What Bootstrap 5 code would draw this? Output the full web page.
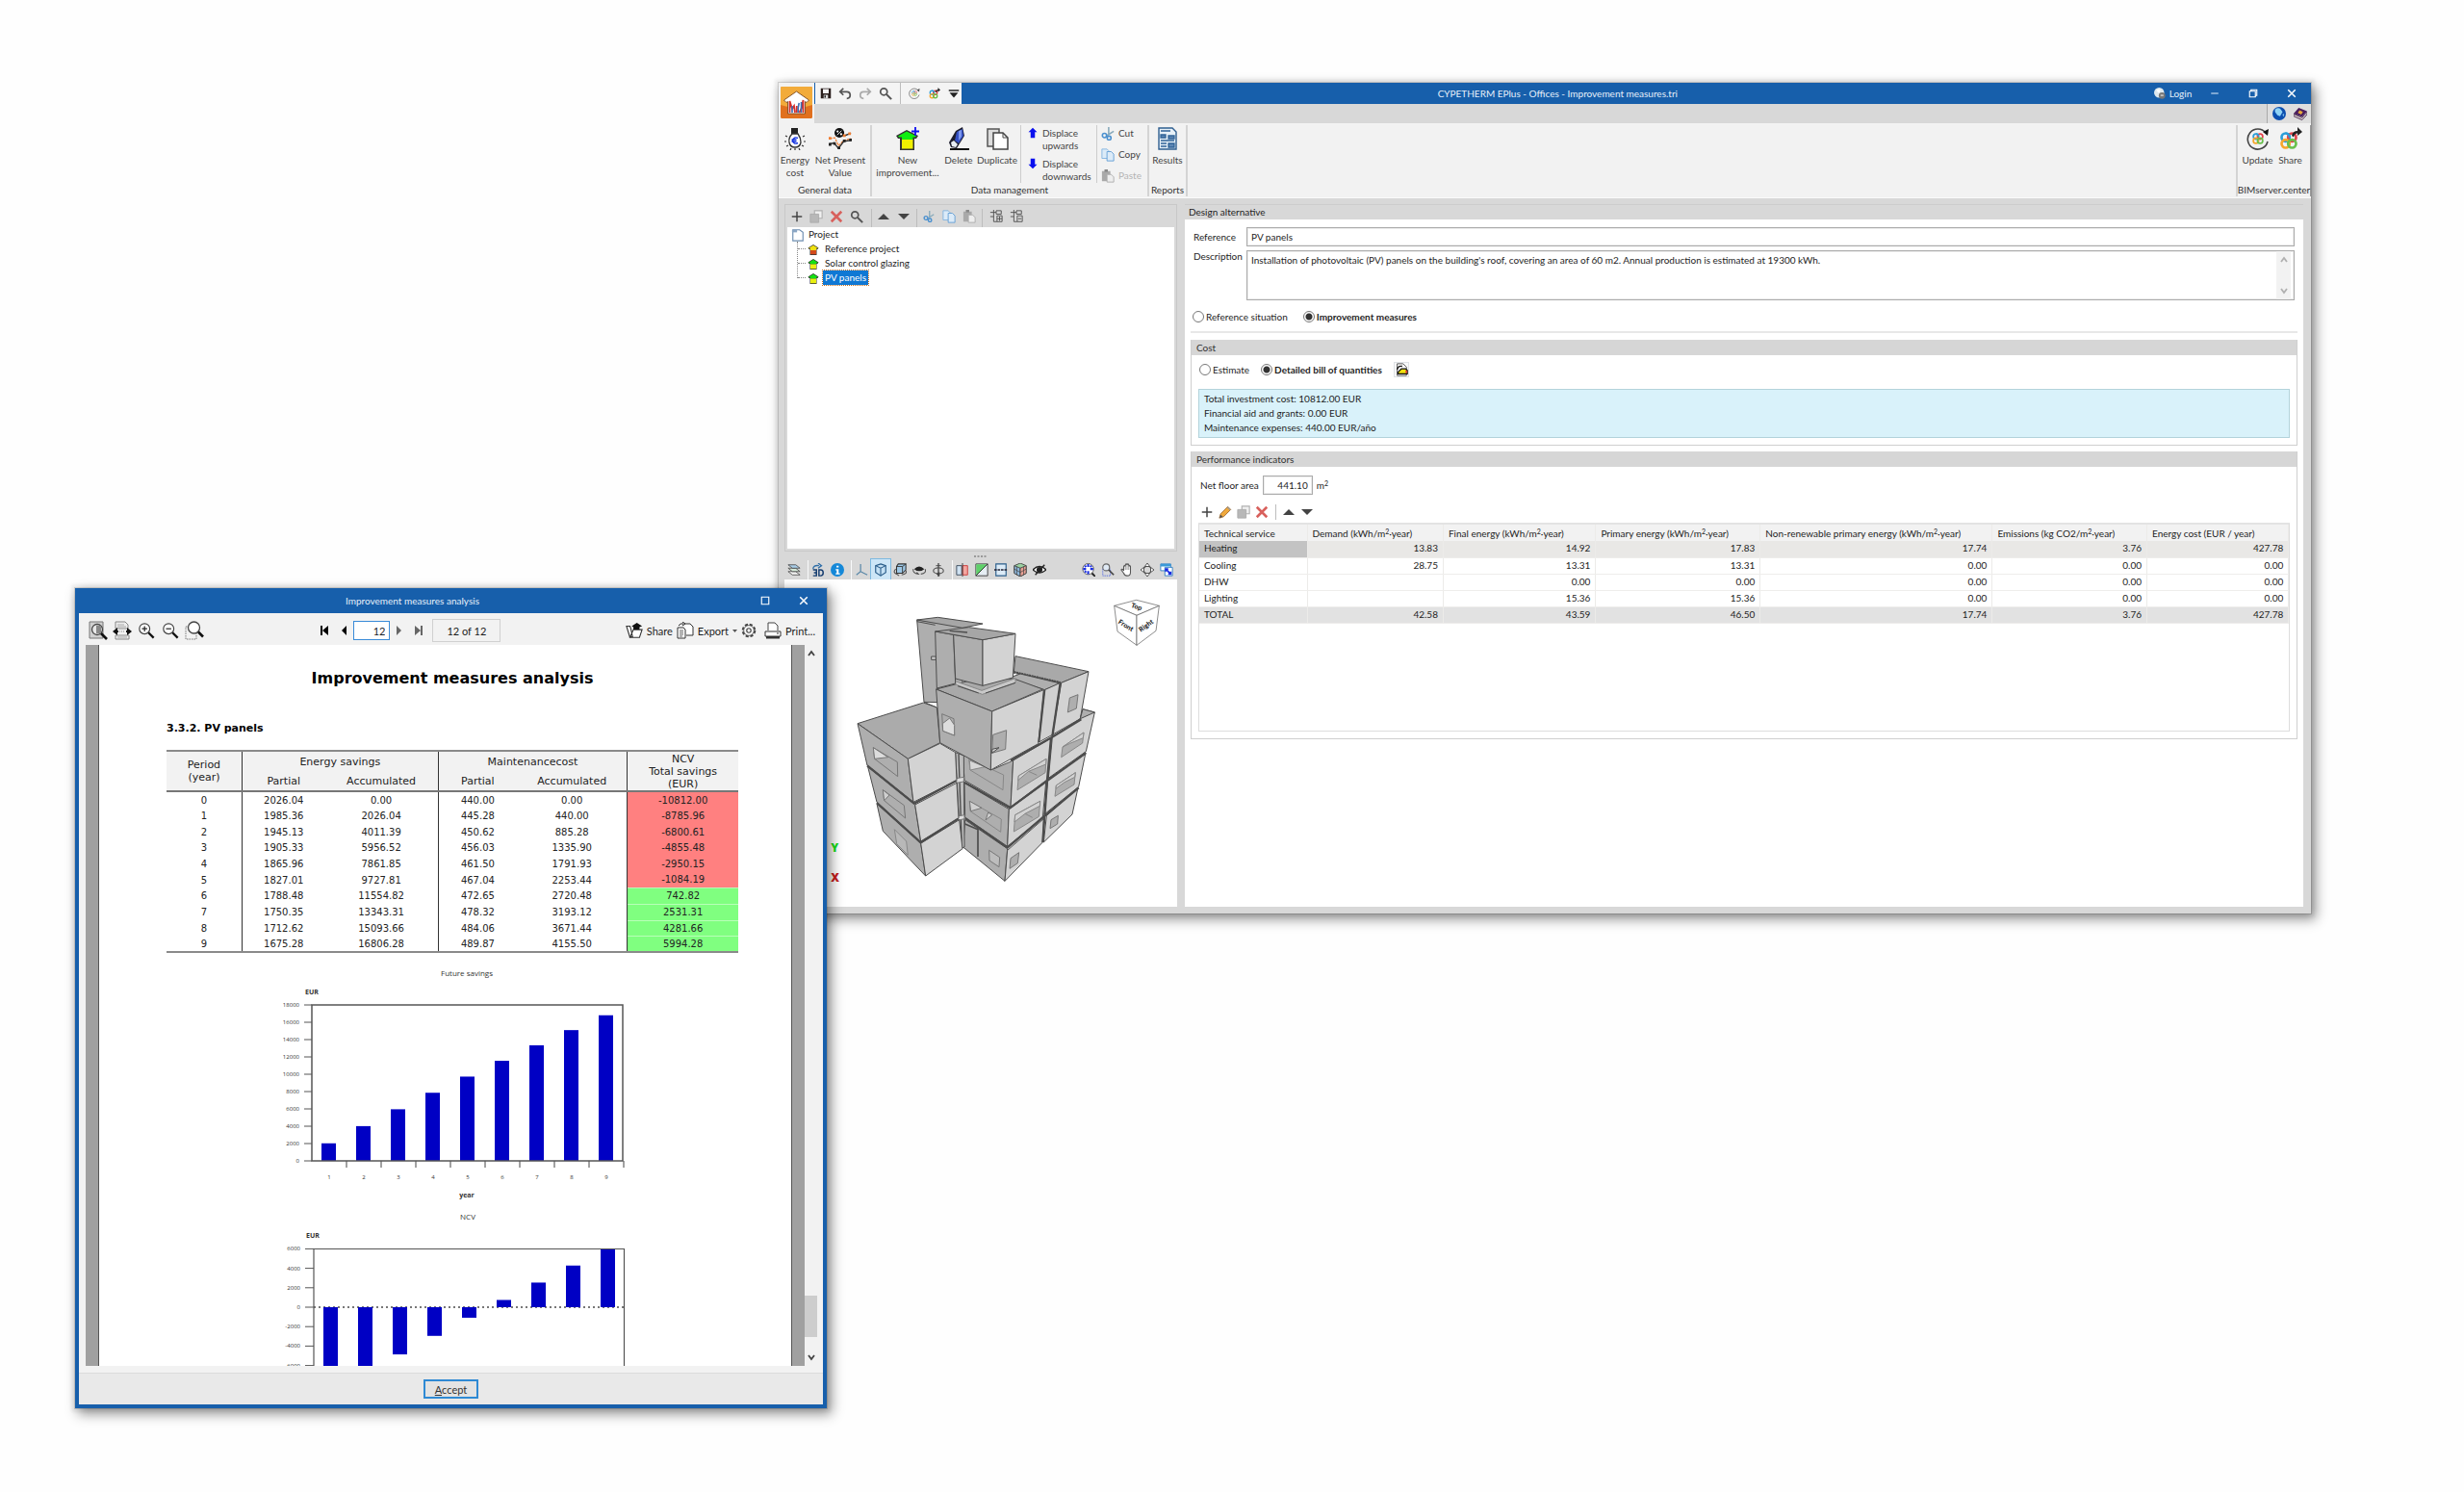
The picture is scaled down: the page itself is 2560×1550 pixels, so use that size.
<!DOCTYPE html>
<html lang="en">
<head>
<meta charset="utf-8">
<meta name="viewport" content="width=device-width, initial-scale=1">
<title>CYPETHERM EPlus - Offices - Improvement measures.tri</title>
<link href="https://cdn.jsdelivr.net/npm/bootstrap@5.3.0/dist/css/bootstrap.min.css" rel="stylesheet">
<style>
:root{--blue:#175fab;--chrome:#d8d8d8;--panel:#f2f2f2;--line:#c8c8c8}
body{font:10px/13px Lato,"Open Sans",sans-serif;color:#1d1d1d;background:#fefefe}
.desktop{min-height:100vh}
.win{box-shadow:0 0 0 1px rgba(0,0,0,.12),0 0 3px 4px rgba(0,0,0,.05),4px 5px 12px 1px rgba(0,0,0,.42)}
.win-main{left:31.6%;top:86px;width:62.2%;background:var(--chrome)}
.win-report{left:78px;top:611px;width:781px;background:var(--panel);border:4px solid var(--blue);border-top:0;font-size:11px}
.titlebar{background:var(--blue);color:#e6f0fa;font-size:10px}
.win-main .titlebar{height:22px}
.win-report .titlebar{height:26px}
.plain{border:0;background:none;padding:0;color:inherit;font:inherit}
svg{display:block}
.i12{width:12px;height:12px}.i14{width:14px;height:14px}.i16{width:16px;height:16px}.i18{width:18px;height:18px}.i24{width:24px;height:24px}
.cell19{width:19px;flex:none}.cell20{width:20px;flex:none}.cell21{width:21px;flex:none}.cell25{width:25px;flex:none}.cell40{width:40px;flex:none}
.appmark{width:37px;height:42px;left:0;top:0;background:var(--panel);z-index:2}
.qat{width:152px;height:22px;margin-left:38px;padding-left:1px;background:#f4f4f4}
.vrule{width:1px;align-self:stretch;background:#bdbdbd;flex:none}
.tabstrip{height:20px}
.tabhelp{width:46px;border-left:1px solid #aaa;background:#dedede}
.ribbon{height:78px;background:var(--panel);border-bottom:1px solid #fafafa;color:#333;padding-left:1px}
.rgroup{border-right:2px solid #d4d4d4;margin:2px 0 1px}
.rgroup-last{border-left:2px solid #d4d4d4;border-right:1px solid #999}
.rgroup-label{line-height:13px}
.rbtn{padding-top:2px;color:#444}
.rbtn svg{margin:0 auto 4px}
.w32{width:32px}.w34{width:34px}.w38{width:38px}.w48{width:48px}.w62{width:62px}.w74{width:74px}
.rdisp{width:80px;gap:6px;padding:2px 0 0 6px;border-left:1px solid #ccc;border-right:1px solid #ccc;text-align:left;color:#444}
.rclip{width:52px;padding:2px 0 0 4px;color:#444}
.dim{color:#b4b4b4}
.workarea{padding:6px 8px 7px 6px;gap:8px}
.side{flex:0 0 408px}
.treepane{border:1px solid var(--line);padding:0 2px 2px}
.tool24{height:23px}
.tree{height:334px;padding:0 0 0 4px;margin:0;background:#fff}
.tree li{height:15px;line-height:15px}
.tree .kids{margin-left:6px;border-left:1px dotted #888;height:38px}
.tree .kids li{gap:6px}
.tree .kids li::before{content:"";width:8px;margin-right:-4px;border-top:1px dotted #888}
.tree .picked{background:#0f78d4;color:#fff;outline:1px dotted #c87020;padding:0 2px;margin-left:-2px}
.splitter{height:9px}
.tool20{height:20px}
.on3d{background:#cde6f7;outline:1px solid #7db9e0}
.pane{background:#fff}
.panehead{height:16px;line-height:15px;background:var(--chrome);padding-left:4px;border-top:1px solid #cdcdcd}
.panebody{padding:8px 6px 0}
.fld{gap:4px;padding:0 3px}
.fld label.fld-label{width:55px;flex:none}
.form-control.box{border:1px solid #ababab;border-radius:0;font:inherit;color:inherit;padding:0 4px;height:20px;min-height:0;background:#fff;box-shadow:inset 0 0 0 1px #ececec}
.form-control.box.num{width:52px;text-align:right}
textarea.form-control.box{height:52px;padding:3px 4px;resize:none;overflow:hidden}
.tascroll{right:4px;top:1px;width:15px;height:50px;background:var(--panel);color:#b0b0b0;padding:4px 0}
.opt input{appearance:none;width:12px;height:12px;border:1px solid #777;border-radius:50%;margin:0;background:#fff}
.opt input:checked{background:radial-gradient(circle,#333 0 3px,#fff 4px)}
.opt{gap:2px;height:16px}
.kindrow{gap:16px;padding:9px 2px 0}
.costrow{gap:12px;padding-left:1px}
.sep2{height:2px;background:#e8e8e8;margin:7px 0}
.grp{border:1px solid #cfcfcf;border-top:0;margin-bottom:6px}
.grphead{height:16px;line-height:16px;background:#d6d6d6;padding-left:5px;color:#333}
.grpbody{padding:7px}
.arearow{padding:2px 0 0 2px;margin-bottom:10px}
.info{background:#d9f2fa;border:1px solid #b3d3db;padding:2px 5px;line-height:15px;margin-top:12px}
.gridbox{height:217px;border:1px solid #ddd;border-top:2px solid #e3e3e3;margin-top:3px}
.table.grid{font-size:10px;line-height:13px;margin:0;table-layout:fixed;color:inherit}
.table.grid th,.table.grid td{height:17px;padding:1px 5px;border:0;border-right:1px solid #ecebe9;border-bottom:1px solid #eeedeb;font-weight:400;background:none;white-space:nowrap;color:inherit}
.table.grid thead th{background:var(--panel);border-bottom:0;padding-top:3px}
.table.grid td{text-align:right}
.table.grid .sel{background:#e9e8e6}.table.grid .sel th{background:#c3c3c3}
.table.grid .tot{background:#e2e2e2}
sup.p2{font-size:7px;line-height:1px;top:-3px;vertical-align:baseline;position:relative}
/* report */
.rtool{height:33px;padding:3px 8px 0 7px}
.pager{padding-right:16px}
.numbox.form-control{width:38px;height:20px;border:1px solid #3a8bd8;border-radius:0;font:inherit;padding:0 4px;text-align:right;min-height:0}
.pages{width:71px;height:24px;border:1px solid #d0d0d0}
.viewport{height:749px;padding:0 6px 0 7px}
.gutter{width:14px;background:#a0a0a0;flex:none}
.gutter.l{border-right:1px solid #555}.gutter.r{border-left:1px solid #555}
.sheet{background:#fff;overflow:hidden;font-family:"DejaVu Sans",Verdana,sans-serif;padding:0 55px 0 70px}
.sheet h1{font-size:16px;line-height:20px;font-weight:700;margin:25px 0 0;color:#000;text-align:center}
.sheet h2{font-size:11px;line-height:14px;font-weight:700;margin:35px 0 15px;color:#000}
.table.ncv{font-size:10px;line-height:13px;table-layout:fixed;text-align:center;margin:0;border-top:2px solid #8a8a8a;border-bottom:2px solid #8a8a8a;color:#222}
.table.ncv th,.table.ncv td{padding:0;border:0;font-weight:400;vertical-align:middle;background:none;color:inherit}
.table.ncv thead{font-size:11px;background:#f2f2f2;border-bottom:2px solid #777}
.table.ncv thead tr{height:21px}
.table.ncv tbody tr{height:17px}
.table.ncv tbody tr:nth-child(3n){height:16px}
.table.ncv .bl{border-left:1px solid #333}
.table.ncv .neg{background:#ff8080}.table.ncv .pos{background:#80ff80;border-top:1px solid #b8ffb8}
.charts text{font-family:"Open Sans",sans-serif;fill:#333}
.vbar{width:15px;background:var(--panel);color:#444;padding:4px 0}
.thumb{width:13px;height:43px;background:#cdcdcd}
.dfoot{height:33px;background:#e9e9e9;border-top:1px solid #dcdcdc;margin-top:7px}
.okbtn{width:57px;height:20px;border:2px solid #2f8ad4;background:#e3e3e3;line-height:15px;padding:0;color:#333}
</style>
<script src="https://cdn.jsdelivr.net/npm/bootstrap@5.3.0/dist/js/bootstrap.bundle.min.js"></script>
</head>
<body>
<svg width="0" height="0" class="position-absolute" aria-hidden="true"><defs>
<symbol id="save" viewBox="0 0 16 16"><path d="M1 1h14v14H1z" fill="#2a1f1d"/><path d="M4 2h8v6H4z" fill="#f4f4f4"/><path d="M5 10h6v5H5z" fill="#ddd"/><path d="M6 11h2v3H6z" fill="#222"/></symbol>
<symbol id="undo" viewBox="0 0 16 16"><path d="M6 2 2 6l4 4M2 6h8q4 0 4 4t-4 4" fill="none" stroke="#555" stroke-width="2"/></symbol>
<symbol id="redo" viewBox="0 0 16 16"><path d="m10 2 4 4-4 4M14 6H6q-4 0-4 4t4 4" fill="none" stroke="#aaa" stroke-width="2"/></symbol>
<symbol id="search" viewBox="0 0 16 16"><circle cx="6" cy="6" r="4" fill="none" stroke="#555" stroke-width="2"/><path d="m9 9 6 6" stroke="#555" stroke-width="2.4"/></symbol>
<symbol id="rings" viewBox="0 0 24 24"><g fill="none" stroke-width="3.2"><circle cx="8" cy="8" r="5" stroke="#2a9ed8"/><circle cx="16" cy="8" r="5" stroke="#e2434b"/><circle cx="8" cy="16" r="5" stroke="#f6a52a"/><circle cx="16" cy="16" r="5" stroke="#67c04b"/><path d="M8 3a5 5 0 0 1 5 5" stroke="#2a9ed8"/></g></symbol>
<symbol id="update" viewBox="0 0 24 24"><path d="M20 6A10.500 10.500 0 1 0 22 15" fill="none" stroke="#444" stroke-width="1.600"/><path d="M17 5l6-3-1 7z" fill="#111"/><use href="#rings" x="5.500" y="5.500" width="13" height="13"/></symbol>
<symbol id="share" viewBox="0 0 24 24"><use href="#rings" x="0" y="4" width="20" height="20"/><path d="M13 9q1-5 6-5V0l5 5-5 4V6.500q-3 0-4 4z" fill="#222"/></symbol>
<symbol id="more" viewBox="0 0 16 16"><path d="M1 3h14v2H1zM2 7h12l-6 7z" fill="#222"/></symbol>
<symbol id="app" viewBox="0 0 33 33"><rect width="33" height="33" rx="1.500" fill="#e0701f"/><path d="M1.500 0h30A1.500 1.500 0 0 1 33 1.500V19q-16 6-33 0V1.500A1.500 1.500 0 0 1 1.500 0" fill="#f2ab3a"/><path d="M16.500 5 3.500 14l2.500 2.500 1.500-1V28h18V15.500l1.500 1 2.500-2.500z" fill="#fff" stroke="#7a4a20" stroke-width=".9"/><path d="M9.500 27V15l2.500 8 2-3 1 7M23.500 27V14l-2 9-2 4M16.800 27v-7" fill="none" stroke="#d8302a" stroke-width="1.800"/><path d="M12 27v-7M21.500 27V16M18.200 27v-5l1-5" fill="none" stroke="#3a6fb4" stroke-width="1.600"/></symbol>
<symbol id="bulb" viewBox="0 0 24 24"><path d="M8 1h7v6H8z" fill="#222"/><path d="M9 7q-4 4-3 9 1 5 6 5t6-5q0-5-3-9z" fill="#fff" stroke="#333" stroke-width="1.300"/><path d="M15 11.500q-4-2-5.500 2.500 1 4.500 5.500 2.500M8.500 13h5M8.500 15h5" fill="none" stroke="#1030e0" stroke-width="1.400"/><path d="M2 9l2 1M1 15h2M3 20l2-1M7 24l1-2M22 9l-2 1M23 15h-2M21 20l-2-1M17 24l-1-2M12 22v2" stroke="#333" stroke-width="1.200"/></symbol>
<symbol id="npv" viewBox="0 0 26 24"><circle cx="12" cy="5.500" r="5.500" fill="#111"/><path d="M9.500 8l5-5" stroke="#fff"/><circle cx="10" cy="4" r="1.200" fill="#fff"/><circle cx="14" cy="7" r="1.200" fill="#fff"/><path d="M1 12l6-1 4 9 6-6 8-2" fill="none" stroke="#ef7d32" stroke-width="1.300" stroke-dasharray="3 1"/><path d="M1 18l5-1 5 6 6-8 8-1M17 9l8-3" fill="none" stroke="#333" stroke-width="1.500"/><path d="M0 17h3v3H0zM5 16h3v3H5zM10 21h3v3h-3zM16 13h3v3h-3zM23 12h3v3h-3z" fill="#222"/><path d="M16 7h3v3h-3zM22 5h3v3h-3zM0 10h3v3H0z" fill="#ef7d32"/></symbol>
<symbol id="house" viewBox="0 0 24 24"><path d="M12 2 1 9l2 3h2v12h14V12h2l2-3z" fill="#333"/><path d="M12 3.500 2.500 9.500l1 1H6V13h12v-2.500h2.500l1-1z" fill="#14e014"/><path d="M6 13h12v9.500H6z" fill="#e8ef10"/></symbol>
<symbol id="housenew" viewBox="0 0 24 24"><path d="M11 3 0 9l2 3h2v12h15V12h2l2-3z" fill="#333"/><path d="M11 4.500 2 9.500l1 1h3V13h11.500v-2.500H20l1-1z" fill="#10ef10"/><path d="M6 13h11.500v9.500H6z" fill="#f0f000"/><path d="M20 0v9M16 4.500h8" stroke="#1010f0" stroke-width="1.800"/></symbol>
<symbol id="houseref" viewBox="0 0 24 24"><path d="M12 2 1 9l2 3h2v12h14V12h2l2-3z" fill="#333"/><path d="M12 3.500 2.500 9.500l1 1H6V14h12v-3.500h2.500l1-1z" fill="#efe010"/><path d="M6 14h12v8.500H6z" fill="#d24a1c"/></symbol>
<symbol id="eraser" viewBox="0 0 24 24"><path d="M3 22h20v2H3z" fill="#111"/><path d="M9 4 16 0l2 9-8 13-6-1-2-5z" fill="#1c1c2c"/><path d="M10 5l6-3 1 7-5 8-4-3z" fill="#3450c4"/><path d="M12 4l3-1v7l-3 4z" fill="#7d97ee"/><path d="M7 14l4 4-2 3-4-1-1-4z" fill="#e8eef4"/></symbol>
<symbol id="dup" viewBox="0 0 24 24"><path d="M2 2h12v18H2z" fill="#ddd" stroke="#555" stroke-width="1.500"/><path d="M8 6h10l5 5v12H8z" fill="#fff" stroke="#444" stroke-width="1.500"/><path d="M18 6v5h5" fill="none" stroke="#444"/></symbol>
<symbol id="up" viewBox="0 0 16 16"><path d="M8 1l6 6h-3v8H5V7H2z" fill="#0a10ee"/></symbol>
<symbol id="down" viewBox="0 0 16 16"><path d="M8 15l6-6h-3V1H5v8H2z" fill="#0a10ee"/></symbol>
<symbol id="cut" viewBox="0 0 16 16"><path d="M9 0v9M15 5 7 10" stroke="#8ab" stroke-width="1.800"/><circle cx="4" cy="10" r="2.500" fill="none" stroke="#4a90cf" stroke-width="1.800"/><circle cx="9.500" cy="13" r="2.300" fill="none" stroke="#4a90cf" stroke-width="1.800"/></symbol>
<symbol id="copy" viewBox="0 0 16 16"><path d="M1 1h6l2 2v9H1z" fill="#dcebf8" stroke="#7fb2e0"/><path d="M7 4h5l3 3v8H7z" fill="#dcebf8" stroke="#5f9bd4"/></symbol>
<symbol id="paste" viewBox="0 0 16 16"><path d="M1 2h10v12H1z" fill="#a9a9a9"/><path d="M4 0h4v3H4z" fill="#888"/><path d="M7 6h5l3 3v6H7z" fill="#eee" stroke="#aaa"/></symbol>
<symbol id="results" viewBox="0 0 20 24"><path d="M1 1h14l4 4v18H1z" fill="#e6f0f8" stroke="#2f5f90" stroke-width="1.400"/><path d="M3 4h10M3 8h5v3H3zM11 9h6v3h-6zM3 14h14M3 17h6M3 20h6M11 17h6v4h-6z" stroke="#2f6296" stroke-width="1.300" fill="#5d87b4"/></symbol>
<symbol id="plus" viewBox="0 0 16 16"><path d="M8 1v14M1 8h14" stroke="#444" stroke-width="2"/></symbol>
<symbol id="stack" viewBox="0 0 16 16"><path d="M6 1h9v9H6z" fill="#f0f0f0" stroke="#b0b0b0" stroke-width="1.300"/><path d="M1 5h10v10H1z" fill="#b8b8b8" stroke="#aaa"/></symbol>
<symbol id="cross" viewBox="0 0 16 16"><path d="M2 2l12 12M14 2 2 14" stroke="#d8605c" stroke-width="3"/></symbol>
<symbol id="triu" viewBox="0 0 16 16"><path d="M8 4l8 8H0z" fill="#444"/></symbol>
<symbol id="trid" viewBox="0 0 16 16"><path d="M8 12l8-8H0z" fill="#444"/></symbol>
<symbol id="texp" viewBox="0 0 16 16"><path d="M1 3h5M5 0v14h4M1 8h4M5 3h3M8 1h6v4H8zM9 7h6v7H9zM12 8v5M9 10.500h6" fill="none" stroke="#555" stroke-width="1.100"/></symbol>
<symbol id="tcol" viewBox="0 0 16 16"><path d="M1 3h5M5 0v14h4M1 8h4M5 3h3M8 1h6v4H8zM9 7h6v7H9zM10 10.500h4" fill="none" stroke="#555" stroke-width="1.100"/></symbol>
<symbol id="doc" viewBox="0 0 16 16"><path d="M2 2h8l4 3v10H2z" fill="#fff" stroke="#6c8db0" stroke-width="1.300"/><path d="M1 2h6v3H1z" fill="#8aa6c4"/></symbol>
<symbol id="layers" viewBox="0 0 16 16"><g stroke="#444" stroke-width=".9"><path d="M1 10h9l5 4H6z" fill="#f4f4f4"/><path d="M1 6h9l5 4H6z" fill="#d5e8d8"/><path d="M1 2h9l5 4H6z" fill="#a9cde8"/></g></symbol>
<symbol id="rot3d" viewBox="0 0 16 16"><path d="M2 7q0-5 7-4M8 0l4 3-4 3" fill="none" stroke="#2f6ea8" stroke-width="1.500"/><path d="M2 8h4v7H2M3 11.500h3M9 8v7h2q3 0 3-3.500T11 8z" fill="none" stroke="#173e70" stroke-width="1.700"/></symbol>
<symbol id="inf" viewBox="0 0 16 16"><circle cx="8" cy="8" r="8" fill="#1588d8"/><path d="M7 3h2.500v2.200H7zM6 7h3.500v5H11v1.500H6V12h1.200V8.500H6z" fill="#fff"/></symbol>
<symbol id="axes" viewBox="0 0 16 16"><path d="M7 1v9L2 14M7 10l8 4" fill="none" stroke="#5a88a8" stroke-width="1.400"/></symbol>
<symbol id="cube" viewBox="0 0 16 16"><path d="M8 1l6 2v8l-6 4-6-4V3z" fill="#c4e0f4" stroke="#2a5d8a" stroke-width="1.300"/><path d="M2 3l6 3 6-3M8 6v9" fill="none" stroke="#2a5d8a" stroke-width="1.200"/></symbol>
<symbol id="cuberot" viewBox="0 0 16 16"><path d="M6 1h9v7l-4 4H4V4z" fill="#9ec8e6" stroke="#333" stroke-width="1.200"/><path d="M4 4h7v8M11 4l4-3" fill="none" stroke="#333"/><path d="M3 7q-4 4 1 6l3 2M15 9q2 4-5 5" fill="none" stroke="#555" stroke-width="1.300"/></symbol>
<symbol id="eyerot" viewBox="0 0 16 16"><path d="M2 7q6-6 12 0-6 5-12 0z" fill="#222"/><path d="M1 7q-1 5 6 6l-2-2M15 7q2 5-5 6" fill="none" stroke="#555" stroke-width="1.200"/></symbol>
<symbol id="pivot" viewBox="0 0 16 16"><path d="M8 0v16" stroke="#444" stroke-width="1.500"/><ellipse cx="8" cy="9" rx="6" ry="3.500" fill="none" stroke="#555" stroke-width="1.300"/><path d="M5 3h6M6 13l3-2v4z" stroke="#444" fill="#444"/></symbol>
<symbol id="secv" viewBox="0 0 16 16"><path d="M1 3h6v11H1z" fill="#cfe2f2" stroke="#345"/><path d="M8 3h6v11H8z" fill="#f3a6a0" stroke="#c33"/><path d="M8 0v16" stroke="#333"/></symbol>
<symbol id="secd" viewBox="0 0 16 16"><path d="M1 1h14v14H1z" fill="#e6eef4" stroke="#333"/><path d="M1.500 1.500h13l-13 13z" fill="#5fd06a"/><path d="M1 15 15 1" stroke="#222"/></symbol>
<symbol id="sech" viewBox="0 0 16 16"><path d="M2 1h12v14H2z" fill="#dcebf7" stroke="#2a5d8a" stroke-width="1.300"/><path d="M0 8h16" stroke="#223" stroke-width="1.500" stroke-dasharray="3 1"/></symbol>
<symbol id="cubec" viewBox="0 0 16 16"><path d="M8 0l7 3v9l-7 4-7-4V3z" fill="#9ad0a0" stroke="#444"/><path d="M1 3l7 3v10l-7-4z" fill="#8fb8dc" stroke="#444"/><path d="M8 6l7-3v9l-7 4z" fill="#e7a094" stroke="#444"/><path d="M1 7l7 4 7-4M4 4v10M12 4v10" fill="none" stroke="#444" stroke-width=".8"/></symbol>
<symbol id="eyeoff" viewBox="0 0 16 16"><path d="M0 8q8-8 16 0-8 7-16 0z" fill="#fff" stroke="#222" stroke-width="1.500"/><circle cx="8" cy="8" r="3.500" fill="#222"/><path d="M3 14 14 2" stroke="#222" stroke-width="1.600"/></symbol>
<symbol id="zext" viewBox="0 0 16 16"><circle cx="7.500" cy="7" r="6.500" fill="#fff" stroke="#555"/><path d="M7.500 1v3.500M7.500 13V9.500M1.500 7H5M13.500 7H10M3.500 3l1.500 1.500M11.500 3 10 4.500M3.500 11 5 9.500" stroke="#1a2de0" stroke-width="2.400"/><path d="m12 12 4 4" stroke="#222" stroke-width="2.200"/></symbol>
<symbol id="zwin" viewBox="0 0 16 16"><path d="M2 7h9v8H2z" fill="none" stroke="#4a62e0" stroke-dasharray="1.500 1"/><circle cx="6" cy="5" r="4" fill="#dfe9f4" stroke="#666" stroke-width="1.300"/><path d="m9 8 6 6" stroke="#444" stroke-width="2"/></symbol>
<symbol id="hand" viewBox="0 0 16 16"><path d="M4 9V4q1-2 2 0V2q1-2 2 0v0q1-2 2 0v2q1-2 2 0v7q0 4-4 4-3 0-4-3L1 8q1-2 3 1" fill="#fff" stroke="#555" stroke-width="1.200"/><path d="M6 4v4M8 3v5M10 4v4" stroke="#777" stroke-width=".8"/></symbol>
<symbol id="orbit" viewBox="0 0 16 16"><circle cx="8" cy="8" r="4.500" fill="none" stroke="#555" stroke-width="1.500"/><path d="M8 0l3 4H5zM8 16l3-4H5zM0 8l4-3v6zM16 8l-4-3v6z" fill="#fff" stroke="#444"/></symbol>
<symbol id="wins" viewBox="0 0 16 16"><path d="M1 1h12v8H1z" fill="#fff" stroke="#2c7cc0"/><path d="M1 1h12v3H1z" fill="#3a9ad8"/><path d="M6 5h9v10H6z" fill="#fff" stroke="#2c7cc0"/><path d="M7 7l6 6M7 10V7h3M13 10v3h-3" stroke="#1a2de0" stroke-width="2" fill="none"/></symbol>
<symbol id="pencil" viewBox="0 0 16 16"><path d="M1 15l1.500-5L11 1.500l3.500 3.500L6 13.500z" fill="#f0a93c" stroke="#a06a30"/><path d="M1 15l1.500-4 2.500 2.500z" fill="#555"/><path d="M10 2.500 13.500 6l1-1L11 1.500z" fill="#999"/></symbol>
<symbol id="import" viewBox="0 0 16 16"><path d="M3 1h7l4 4v10H3z" fill="#fff" stroke="#444"/><path d="M3 8q1-5 6-4" fill="none" stroke="#111" stroke-width="1.500"/><path d="M4 11l4-4h5l2 2v4H4z" fill="#efe010" stroke="#111" stroke-width="1.500"/><path d="M13 9h2v3h-2z" fill="#d33"/></symbol>
<symbol id="globe" viewBox="0 0 16 16"><circle cx="8" cy="8" r="8" fill="#0c4fb0"/><path d="M3 3q4-3 7 0l2 3-3 5-3-1-3-4zM12 9l2-1-1 4z" fill="#8fd2f5"/></symbol>
<symbol id="login" viewBox="0 0 16 16"><circle cx="7" cy="7" r="7" fill="#dfe9ee"/><path d="M3 4q3-3 6-1l-2 5z" fill="#fff"/><circle cx="11" cy="11" r="4.500" fill="#777"/><path d="M9 10h4v1.500H9z" fill="#eee"/></symbol>
<symbol id="book" viewBox="0 0 16 16"><path d="M6 1l10 4-6 7L0 8z" fill="#4a1e5e"/><path d="M0 8.500l10 4.500 6-7v3l-6 6.500L0 11z" fill="#efe6e0" stroke="#3a1a40"/><path d="M7 4l4 2-2 3-4-2z" fill="#e8a83a"/></symbol>
<symbol id="xw" viewBox="0 0 16 16"><path d="M3 3l10 10M13 3 3 13" stroke="#fff" stroke-width="2"/></symbol>
<symbol id="minw" viewBox="0 0 16 16"><path d="M3 8h10" stroke="#cfe0f2" stroke-width="1.500"/></symbol>
<symbol id="resw" viewBox="0 0 16 16"><path d="M3 5h8v8H3zM5 5V3h8v8h-2" fill="none" stroke="#fff" stroke-width="1.500"/></symbol>
<symbol id="maxw" viewBox="0 0 16 16"><path d="M3 3h10v10H3z" fill="none" stroke="#fff" stroke-width="1.500"/></symbol>
<symbol id="pfit" viewBox="0 0 20 20"><path d="M1 1h14v17H1z" fill="#d0d0d0" stroke="#777"/><circle cx="9" cy="9" r="5.500" fill="#e8e8e8" stroke="#444" stroke-width="1.300"/><path d="M8 5h5v8H8z" fill="#888"/><path d="m13 13 6 6" stroke="#111" stroke-width="2.600"/></symbol>
<symbol id="pwid" viewBox="0 0 20 20"><path d="M3 1h10l3 3v4H3zM3 15h14v4H3z" fill="#eee" stroke="#888"/><path d="M5 4h7M5 6h9M5 17h10" stroke="#aaa"/><path d="M0 11l5-4v3h1v2H5v3zM20 11l-5-4v3h-1v2h1v3z" fill="#111"/><path d="M7 11h6" stroke="#888" stroke-dasharray="1 1"/></symbol>
<symbol id="zin" viewBox="0 0 20 20"><circle cx="8" cy="8" r="6" fill="#fff" stroke="#444" stroke-width="1.300"/><path d="M5 8h6M8 5v6" stroke="#222" stroke-width="1.300"/><path d="m12.500 12.500 6 6" stroke="#111" stroke-width="2.600"/></symbol>
<symbol id="zout" viewBox="0 0 20 20"><circle cx="8" cy="8" r="6" fill="#fff" stroke="#444" stroke-width="1.300"/><path d="M5 8h6" stroke="#222" stroke-width="1.300"/><path d="m12.500 12.500 6 6" stroke="#111" stroke-width="2.600"/></symbol>
<symbol id="zsel" viewBox="0 0 20 20"><path d="M1 6h11v13H1z" fill="none" stroke="#777" stroke-dasharray="1.500 1"/><circle cx="9.500" cy="7" r="6" fill="#fff" stroke="#444" stroke-width="1.300"/><path d="m14 11.500 5 5" stroke="#111" stroke-width="2.600"/></symbol>
<symbol id="nfirst" viewBox="0 0 12 12"><path d="M2 1h2v10H2zM10 1v10L4 6z"/></symbol>
<symbol id="nprev" viewBox="0 0 12 12"><path d="M9 1v10L4 6z"/></symbol>
<symbol id="nnext" viewBox="0 0 12 12"><path d="M3 1v10l5-5z"/></symbol>
<symbol id="nlast" viewBox="0 0 12 12"><path d="M8 1h2v10H8zM2 1v10l6-5z"/></symbol>
<symbol id="shr" viewBox="0 0 20 18"><path d="M1 4h4l1 3 2 9-3 1zM5 17l4-9h10l-3 9z" fill="#fff" stroke="#333" stroke-width="1.200"/><path d="M13 0l6 4-3 1v3H9V5L7 4z" fill="#111"/></symbol>
<symbol id="expt" viewBox="0 0 18 18"><path d="M9 2h5l3 3v9h-7" fill="#fff" stroke="#333"/><path d="M1 6h6l2 2v9H1z" fill="#fff" stroke="#333"/><path d="M3 9h4M3 11h4M3 13h4M3 15h3" stroke="#666"/><path d="M2 4q2-3 5-2M6 0l3 2-3 2" fill="none" stroke="#222"/></symbol>
<symbol id="gear" viewBox="0 0 18 18"><circle cx="9" cy="9" r="7" fill="none" stroke="#444" stroke-width="2.400" stroke-dasharray="3.500 2"/><circle cx="9" cy="9" r="6" fill="#fafafa" stroke="#555"/><circle cx="9" cy="9" r="2.500" fill="none" stroke="#444" stroke-width="1.300"/></symbol>
<symbol id="print" viewBox="0 0 18 18"><path d="M4 9V1h7l3 3v5" fill="#fff" stroke="#444"/><path d="M1 10h16v5H1z" fill="#fff" stroke="#333"/><path d="M2 15h14v2.500H2z" fill="#333"/><path d="M13 12h2" stroke="#333"/></symbol>
<symbol id="cu" viewBox="0 0 10 10"><path d="M2 7l3-4 3 4" fill="none" stroke="currentColor" stroke-width="1.800"/></symbol>
<symbol id="cd" viewBox="0 0 10 10"><path d="M2 3l3 4 3-4" fill="none" stroke="currentColor" stroke-width="1.800"/></symbol>
</defs></svg>

<main class="desktop position-relative overflow-hidden">
<section class="win win-main position-absolute" aria-label="CYPETHERM EPlus">
  <header class="position-relative">
    <div class="appmark position-absolute d-flex justify-content-center pt-1"><svg width="33" height="33"><use href="#app"/></svg></div>
    <div class="titlebar d-flex align-items-center">
      <div class="qat d-flex align-items-center">
        <button class="plain cell20" aria-label="Save"><svg class="i12 mx-auto"><use href="#save"/></svg></button>
        <button class="plain cell21" aria-label="Undo"><svg class="i14 mx-auto"><use href="#undo"/></svg></button>
        <button class="plain cell21" aria-label="Redo"><svg class="i14 mx-auto"><use href="#redo"/></svg></button>
        <button class="plain cell21" aria-label="Search"><svg class="i14 mx-auto"><use href="#search"/></svg></button>
        <span class="vrule ms-1"></span>
        <button class="plain cell21 ms-1" aria-label="Update"><svg class="i12 mx-auto opacity-75"><use href="#update"/></svg></button>
        <button class="plain cell20" aria-label="Share"><svg class="i12 mx-auto"><use href="#share"/></svg></button>
        <button class="plain cell20" aria-label="More"><svg class="i12 mx-auto"><use href="#more"/></svg></button>
      </div>
      <div class="flex-fill text-center">CYPETHERM EPlus - Offices - Improvement measures.tri</div>
      <button class="plain d-flex align-items-center gap-1"><svg class="i12"><use href="#login"/></svg>Login</button>
      <button class="plain cell40 ms-1" aria-label="Minimize"><svg class="i12 mx-auto"><use href="#minw"/></svg></button>
      <button class="plain cell40" aria-label="Restore"><svg class="i12 mx-auto"><use href="#resw"/></svg></button>
      <button class="plain cell40" aria-label="Close"><svg class="i12 mx-auto"><use href="#xw"/></svg></button>
    </div>
    <div class="tabstrip d-flex justify-content-end"><div class="tabhelp d-flex align-items-center justify-content-around"><button class="plain" aria-label="Web"><svg class="i14"><use href="#globe"/></svg></button><button class="plain" aria-label="Help"><svg class="i14"><use href="#book"/></svg></button></div></div>
  </header>

  <nav class="ribbon d-flex text-center" aria-label="Ribbon">
    <div class="rgroup d-flex flex-column justify-content-between">
      <div class="d-flex align-items-start">
        <button class="plain rbtn w32"><svg class="i24"><use href="#bulb"/></svg>Energy cost</button>
        <button class="plain rbtn w62"><svg class="i24"><use href="#npv"/></svg>Net Present Value</button>
      </div><div class="rgroup-label">General data</div>
    </div>
    <div class="rgroup d-flex flex-column justify-content-between">
      <div class="d-flex align-items-start">
        <button class="plain rbtn w74"><svg class="i24"><use href="#housenew"/></svg>New improvement...</button>
        <button class="plain rbtn w32"><svg class="i24"><use href="#eraser"/></svg>Delete</button>
        <button class="plain rbtn w48"><svg class="i24"><use href="#dup"/></svg>Duplicate</button>
        <div class="rdisp d-flex flex-column">
          <button class="plain d-flex gap-1 text-start"><svg class="i12 flex-shrink-0"><use href="#up"/></svg><span>Displace<br>upwards</span></button>
          <button class="plain d-flex gap-1 text-start"><svg class="i12 flex-shrink-0"><use href="#down"/></svg><span>Displace<br>downwards</span></button>
        </div>
        <div class="rclip d-flex flex-column gap-2">
          <button class="plain d-flex gap-1"><svg class="i14"><use href="#cut"/></svg>Cut</button>
          <button class="plain d-flex gap-1"><svg class="i14"><use href="#copy"/></svg>Copy</button>
          <button class="plain d-flex gap-1 dim"><svg class="i14"><use href="#paste"/></svg>Paste</button>
        </div>
      </div><div class="rgroup-label">Data management</div>
    </div>
    <div class="rgroup d-flex flex-column justify-content-between">
      <button class="plain rbtn w38"><svg class="i24"><use href="#results"/></svg>Results</button>
      <div class="rgroup-label">Reports</div>
    </div>
    <div class="rgroup rgroup-last ms-auto d-flex flex-column justify-content-between">
      <div class="d-flex justify-content-center">
        <button class="plain rbtn w34"><svg class="i24"><use href="#update"/></svg>Update</button>
        <button class="plain rbtn w34"><svg class="i24"><use href="#share"/></svg>Share</button>
      </div><div class="rgroup-label">BIMserver.center</div>
    </div>
  </nav>

  <div class="workarea d-flex">
    <div class="side d-flex flex-column">
      <div class="treepane">
        <div class="tool24 d-flex align-items-center">
          <button class="plain cell20" aria-label="Add"><svg class="i12 mx-auto"><use href="#plus"/></svg></button>
          <button class="plain cell21" aria-label="Duplicate"><svg class="i14 mx-auto"><use href="#stack"/></svg></button>
          <button class="plain cell21" aria-label="Delete"><svg class="i14 mx-auto"><use href="#cross"/></svg></button>
          <button class="plain cell21" aria-label="Find"><svg class="i14 mx-auto"><use href="#search"/></svg></button>
          <span class="vrule ms-1 mt-1"></span>
          <button class="plain cell21 ps-1" aria-label="Up"><svg class="i12 mx-auto"><use href="#triu"/></svg></button>
          <button class="plain cell21 ps-1" aria-label="Down"><svg class="i12 mx-auto"><use href="#trid"/></svg></button>
          <span class="vrule ms-1 mt-1"></span>
          <button class="plain cell21 ps-1" aria-label="Cut"><svg class="i12 mx-auto"><use href="#cut"/></svg></button>
          <button class="plain cell21 ps-1" aria-label="Copy"><svg class="i14 mx-auto"><use href="#copy"/></svg></button>
          <button class="plain cell21 ps-1" aria-label="Paste"><svg class="i14 mx-auto"><use href="#paste"/></svg></button>
          <span class="vrule ms-1 mt-1"></span>
          <button class="plain cell21 ms-1" aria-label="Expand"><svg class="i14 mx-auto"><use href="#texp"/></svg></button>
          <button class="plain cell21" aria-label="Collapse"><svg class="i14 mx-auto"><use href="#tcol"/></svg></button>
        </div>
        <ul class="tree list-unstyled">
          <li class="d-flex align-items-center gap-1"><svg class="i14"><use href="#doc"/></svg>Project</li>
          <li><ul class="kids list-unstyled">
            <li class="d-flex align-items-center"><svg class="i12"><use href="#houseref"/></svg><span>Reference project</span></li>
            <li class="d-flex align-items-center"><svg class="i12"><use href="#house"/></svg><span>Solar control glazing</span></li>
            <li class="d-flex align-items-center"><svg class="i12"><use href="#house"/></svg><span class="picked">PV panels</span></li>
          </ul></li>
        </ul>
      </div>
      <div class="splitter d-flex justify-content-center align-items-center"><svg width="14" height="2"><path d="M0 1h14" stroke="#999" stroke-width="2" stroke-dasharray="2 1.500"/></svg></div>
      <div class="tool20 d-flex align-items-center">
        <button class="plain cell20" aria-label="Layers"><svg class="i14 mx-auto"><use href="#layers"/></svg></button><span class="vrule ms-1 bg-light"></span>
        <button class="plain cell20" aria-label="3D"><svg class="i14 mx-auto"><use href="#rot3d"/></svg></button>
        <button class="plain cell20" aria-label="Info"><svg class="i14 mx-auto"><use href="#inf"/></svg></button><span class="vrule ms-1 bg-light"></span>
        <button class="plain cell20" aria-label="Axes"><svg class="i14 mx-auto"><use href="#axes"/></svg></button>
        <button class="plain cell20 on3d py-1" aria-label="Perspective"><svg class="i14 mx-auto"><use href="#cube"/></svg></button>
        <button class="plain cell20" aria-label="Orbit"><svg class="i14 mx-auto"><use href="#cuberot"/></svg></button>
        <button class="plain cell20" aria-label="Look"><svg class="i14 mx-auto"><use href="#eyerot"/></svg></button>
        <button class="plain cell20" aria-label="Turn"><svg class="i14 mx-auto"><use href="#pivot"/></svg></button><span class="vrule ms-1 bg-light"></span>
        <button class="plain cell20" aria-label="Section X"><svg class="i14 mx-auto"><use href="#secv"/></svg></button>
        <button class="plain cell20" aria-label="Section Y"><svg class="i14 mx-auto"><use href="#secd"/></svg></button>
        <button class="plain cell20" aria-label="Section Z"><svg class="i14 mx-auto"><use href="#sech"/></svg></button>
        <button class="plain cell20" aria-label="Colours"><svg class="i14 mx-auto"><use href="#cubec"/></svg></button>
        <button class="plain cell20" aria-label="Hide"><svg class="i14 mx-auto"><use href="#eyeoff"/></svg></button>
        <button class="plain cell20 ms-auto" aria-label="Zoom extents"><svg class="i14 mx-auto"><use href="#zext"/></svg></button>
        <button class="plain cell20" aria-label="Zoom window"><svg class="i14 mx-auto"><use href="#zwin"/></svg></button>
        <button class="plain cell21" aria-label="Pan"><svg class="i14 mx-auto"><use href="#hand"/></svg></button>
        <button class="plain cell20" aria-label="Move"><svg class="i14 mx-auto"><use href="#orbit"/></svg></button>
        <button class="plain cell21" aria-label="Windows"><svg class="i14 mx-auto"><use href="#wins"/></svg></button>
      </div>
      <svg class="bg-white w-100" viewBox="45 96 1224 1020" role="img" aria-label="3D building model">
        <g stroke="#4c4c4c" stroke-width="3" stroke-linejoin="round" fill="#aeaeae">
          <path d="M458 222 600 238V480L480 478z"/><path d="M458 222 523 214 663 234 600 247z" fill="#a6a6a6"/><path d="M458 227 515 238M480 478 520 495M503 336h14v10h-14z" fill="#ccc"/>
          <path d="M765 335 993 383 908 418 760 385z" fill="#a9a9a9"/><path d="M760 385 905 418" stroke-width="8" stroke-dasharray="6 2"/>
          <path d="M908 418 993 383 967 530 880 580z" fill="#d3d3d3"/><path d="M934 465 960 455 955 498 928 510z" stroke="#777"/>
          <path d="M745 403 780 390 905 420 856 440z"/><path d="M856 440 905 418 880 580 838 603z" fill="#d0d0d0"/><path d="M905 418 880 585" stroke-width="7"/>
          <path d="M975 500 1012 510 985 632 868 715 880 588 967 530z" fill="#d3d3d3"/><path d="M975 500 1012 510 967 530z"/>
          <path d="M912 618 978 573 974 606 908 650z" fill="#aeaeae" stroke="#888"/><path d="M912 618 978 573 976 590 935 607z" fill="#d3d3d3" stroke="#888"/>
          <path d="M600 625 690 690 758 660 750 805 606 722z"/><path d="M620 655 728 705 726 752 624 690z" stroke="#888"/><path d="M622 660 670 680 624 690z" fill="#d8d8d8" stroke="#888"/>
          <path d="M758 660 878 590 866 718 750 805z" fill="#d3d3d3"/><path d="M775 708 861 655 858 698 771 752z" stroke="#888"/><path d="M775 708 861 655 860 672 806 694 773 722z" stroke="#888" fill="#d3d3d3"/><path d="M806 694 832 706" stroke="#888"/>
          <path d="M866 718 983 640 962 742 855 828z" fill="#d3d3d3"/><path d="M892 738 952 698 948 735 888 772z" stroke="#888"/><path d="M892 738 952 698 950 712 918 728 891 748z" fill="#d3d3d3" stroke="#888"/>
          <path d="M606 730 745 812 740 928 608 838z"/><path d="M622 787 721 843 719 883 624 818z" stroke="#888"/><path d="M622 787 660 808 626 818zM680 822 692 830 672 846z" fill="#d0d0d0" stroke="#777"/>
          <path d="M745 812 860 728 850 838 740 928z" fill="#d3d3d3"/><path d="M764 830 842 787 838 835 760 882z" stroke="#888"/><path d="M764 830 842 787 841 802 795 826 762 852z" fill="#d3d3d3" stroke="#888"/><path d="M795 826 818 838" stroke="#888"/>
          <path d="M608 845 740 935 732 1036 602 930z"/><path d="M648 873V960M608 858 648 875" stroke-width="5"/><path d="M683 940 716 962 714 992 684 972z" fill="#bdbdbd" stroke="#777"/>
          <path d="M740 940 853 842 850 915 732 1036z" fill="#d3d3d3"/><path d="M862 832 960 745 942 828 853 915z" fill="#d3d3d3"/><path d="M750 965 776 947 772 980 747 997zM876 845 898 832 896 858 873 872z" stroke="#777"/>
          <path d="M606 728 748 808 866 722 985 636M608 840 740 932 855 834 962 745M750 660 878 588 970 532M876 590 864 722 850 915" fill="none" stroke-width="7"/>
          <path d="M273 545 478 480 520 495 530 605 430 655z" fill="#ababab"/>
          <path d="M578 635 604 645 606 930 594 935z" fill="#bdbdbd"/><path d="M588 640 598 932" stroke-width="4"/><path d="M580 716 604 712V726L582 730zM585 834 606 830V842L588 846z" fill="#ddd" stroke="#777"/>
          <path d="M273 545 430 655 447 790 303 675z"/><path d="M430 655 530 607 578 635 582 722 447 790z" fill="#d3d3d3"/><path d="M322 620 397 665 398 710 326 655z" stroke="#777"/><path d="M322 620 368 650 326 655z" fill="#ddd" stroke="#777"/>
          <path d="M305 680 452 798 470 915 333 790z"/><path d="M452 798 582 730 588 840 470 912z" fill="#d3d3d3"/><path d="M352 752 418 800 422 840 356 785z" stroke="#777"/><path d="M352 752 372 768 356 785z" fill="#d0d0d0" stroke="#777"/>
          <path d="M333 795 470 918 485 1020 352 880z"/><path d="M470 918 590 845 600 935 485 1020z" fill="#d3d3d3"/><path d="M388 875 425 912 430 955 395 920z" fill="#b8b8b8" stroke="#888"/>
          <path d="M303 676 449 794 580 724M333 792 470 916 586 842" fill="none" stroke-width="7"/>
          <path d="M518 438 620 412 760 405 850 438 692 507z" fill="#a9a9a9"/>
          <path d="M575 412 660 442 765 404 765 418 662 454 580 424z" fill="#c8c8c8" stroke="#888"/><path d="M585 428 650 450M672 450 765 418"/>
          <path d="M518 438 692 507 688 690 530 605z"/><path d="M692 507 853 440 836 608 688 690z" fill="#d3d3d3"/><path d="M856 440 838 603" stroke-width="6"/>
          <path d="M536 515 573 530 575 582 539 568z" stroke="#777"/><path d="M538 545 560 528 575 550V582L539 568z" fill="#ddd" stroke="#777"/><path d="M695 580 737 566 734 625 692 637z" stroke="#777"/><path d="M693 625 714 620 692 637z" fill="#ddd"/>
          <path d="M515 258 572 268 578 420 520 435z"/><path d="M572 268 663 284V427L578 405z"/><path d="M663 284 765 265 757 402 663 427z" fill="#d3d3d3"/><path d="M515 258 620 245 765 265 663 284z" fill="#a6a6a6"/><path d="M560 256 615 261" stroke-width="4"/>
        </g>
        <g fill="#fff" stroke="#555" stroke-width="2"><path d="M1073 178 1142 160 1213 178 1143 208z"/><path d="M1073 178 1143 208V301L1083 258z"/><path d="M1213 178 1143 208V301L1203 256z"/></g>
        <g font-family="Lato,sans-serif" font-weight="900" font-size="21" fill="#222"><text transform="translate(1124 182) rotate(18)">Top</text><text transform="translate(1084 232) rotate(32)">Front</text><text transform="translate(1156 260) rotate(-36)">Right</text></g>
        <g font-family="Open Sans,sans-serif" font-weight="800" font-size="36"><text x="190" y="946" fill="#1be01b">Y</text><text x="190" y="1038" fill="#c81e1e">X</text></g>
      </svg>
    </div>

    <div class="pane flex-fill">
      <div class="panehead">Design alternative</div>
      <form class="panebody">
        <div class="fld d-flex flex-column">
          <div class="d-flex align-items-center"><label class="fld-label" for="ref">Reference</label><input id="ref" class="form-control box" value="PV panels"></div>
          <div class="d-flex position-relative"><label class="fld-label" for="desc">Description</label><textarea id="desc" class="form-control box">Installation of photovoltaic (PV) panels on the building's roof, covering an area of 60 m2. Annual production is estimated at 19300 kWh.</textarea>
            <div class="tascroll position-absolute d-flex flex-column align-items-center justify-content-between"><svg width="10" height="10"><use href="#cu"/></svg><svg width="10" height="10"><use href="#cd"/></svg></div></div>
        </div>
        <div class="kindrow d-flex">
          <label class="opt d-flex align-items-center"><input type="radio" name="kind">Reference situation</label>
          <label class="opt d-flex align-items-center fw-bold"><input type="radio" name="kind" checked>Improvement measures</label>
        </div>
        <div class="sep2"></div>
        <section class="grp">
          <div class="grphead">Cost</div>
          <div class="grpbody">
            <div class="costrow d-flex align-items-center">
              <label class="opt d-flex align-items-center"><input type="radio" name="cost">Estimate</label>
              <label class="opt d-flex align-items-center fw-bold"><input type="radio" name="cost" checked>Detailed bill of quantities</label>
              <button type="button" class="plain i16 bg-secondary-subtle border" aria-label="Edit bill"><svg class="i14"><use href="#import"/></svg></button>
            </div>
            <div class="info">Total investment cost: 10812.00 EUR<br>Financial aid and grants: 0.00 EUR<br>Maintenance expenses: 440.00 EUR/año</div>
          </div>
        </section>
        <section class="grp">
          <div class="grphead">Performance indicators</div>
          <div class="grpbody">
            <div class="arearow d-flex align-items-center gap-1"><label for="area">Net floor area</label><input id="area" class="form-control box num" value="441.10"><span>m<sup class="p2">2</sup></span></div>
            <div class="d-flex align-items-center i16 w-100">
              <button type="button" class="plain cell19" aria-label="Add"><svg class="i12 mx-auto"><use href="#plus"/></svg></button>
              <button type="button" class="plain cell19" aria-label="Edit"><svg class="i14 mx-auto"><use href="#pencil"/></svg></button>
              <button type="button" class="plain cell19" aria-label="Duplicate"><svg class="i14 mx-auto"><use href="#stack"/></svg></button>
              <button type="button" class="plain cell19" aria-label="Delete"><svg class="i14 mx-auto"><use href="#cross"/></svg></button>
              <span class="vrule ms-1"></span>
              <button type="button" class="plain cell19 ms-1" aria-label="Up"><svg class="i12 mx-auto"><use href="#triu"/></svg></button>
              <button type="button" class="plain cell19" aria-label="Down"><svg class="i12 mx-auto"><use href="#trid"/></svg></button>
            </div>
            <div class="gridbox">
              <table class="table grid">
                <colgroup><col style="width:9.9%"><col style="width:12.5%"><col style="width:14%"><col style="width:15.1%"><col style="width:21.3%"><col style="width:14.2%"><col style="width:13%"></colgroup>
                <thead><tr><th>Technical service</th><th>Demand (kWh/m<sup class="p2">2</sup>·year)</th><th>Final energy (kWh/m<sup class="p2">2</sup>·year)</th><th>Primary energy (kWh/m<sup class="p2">2</sup>·year)</th><th>Non-renewable primary energy (kWh/m<sup class="p2">2</sup>·year)</th><th>Emissions (kg CO2/m<sup class="p2">2</sup>·year)</th><th>Energy cost (EUR / year)</th></tr></thead>
                <tbody>
                <tr class="sel"><th>Heating</th><td>13.83</td><td>14.92</td><td>17.83</td><td>17.74</td><td>3.76</td><td>427.78</td></tr>
                <tr><th>Cooling</th><td>28.75</td><td>13.31</td><td>13.31</td><td>0.00</td><td>0.00</td><td>0.00</td></tr>
                <tr><th>DHW</th><td></td><td>0.00</td><td>0.00</td><td>0.00</td><td>0.00</td><td>0.00</td></tr>
                <tr><th>Lighting</th><td></td><td>15.36</td><td>15.36</td><td>0.00</td><td>0.00</td><td>0.00</td></tr>
                <tr class="tot"><th>TOTAL</th><td>42.58</td><td>43.59</td><td>46.50</td><td>17.74</td><td>3.76</td><td>427.78</td></tr>
                </tbody>
              </table>
            </div>
          </div>
        </section>
      </form>
    </div>
  </div>
</section>

<section class="win win-report position-absolute" aria-label="Improvement measures analysis">
  <header class="titlebar d-flex align-items-center">
    <div class="flex-fill text-center">Improvement measures analysis</div>
    <button class="plain cell40" aria-label="Maximize"><svg class="i12 mx-auto"><use href="#maxw"/></svg></button>
    <button class="plain cell40" aria-label="Close"><svg class="i12 mx-auto"><use href="#xw"/></svg></button>
  </header>
  <div class="rtool d-flex align-items-center">
    <button class="plain cell25" aria-label="Whole page"><svg class="mx-auto" width="20" height="20"><use href="#pfit"/></svg></button>
    <button class="plain cell25" aria-label="Page width"><svg class="mx-auto" width="20" height="20"><use href="#pwid"/></svg></button>
    <button class="plain cell25" aria-label="Zoom in"><svg class="mx-auto" width="18" height="18"><use href="#zin"/></svg></button>
    <button class="plain cell25" aria-label="Zoom out"><svg class="mx-auto" width="18" height="18"><use href="#zout"/></svg></button>
    <button class="plain cell25" aria-label="Zoom area"><svg class="mx-auto" width="20" height="20"><use href="#zsel"/></svg></button>
    <div class="pager d-flex align-items-center mx-auto">
      <button class="plain cell20" aria-label="First page"><svg class="i12 mx-auto"><use href="#nfirst"/></svg></button>
      <button class="plain cell20" aria-label="Previous page"><svg class="i12 mx-auto"><use href="#nprev"/></svg></button>
      <input class="form-control numbox" value="12" aria-label="Page">
      <button class="plain cell20" aria-label="Next page"><svg class="i12 mx-auto" fill="#666"><use href="#nnext"/></svg></button>
      <button class="plain cell20" aria-label="Last page"><svg class="i12 mx-auto" fill="#666"><use href="#nlast"/></svg></button>
      <div class="pages d-flex align-items-center justify-content-center ms-1">12 of 12</div>
    </div>
    <button class="plain d-flex align-items-center gap-1"><svg class="i18"><use href="#shr"/></svg>Share</button>
    <button class="plain d-flex align-items-center gap-1 ms-1"><svg class="i18"><use href="#expt"/></svg>Export<svg width="5" height="3"><path d="M0 0h5l-2.500 3z" fill="#555"/></svg></button>
    <button class="plain ms-1" aria-label="Settings"><svg class="i16"><use href="#gear"/></svg></button>
    <button class="plain d-flex align-items-center gap-1 ms-2"><svg class="i18"><use href="#print"/></svg>Print...</button>
  </div>
  <div class="viewport d-flex">
    <div class="gutter l"></div>
    <article class="sheet flex-fill">
      <h1>Improvement measures analysis</h1>
      <h2>3.3.2. PV panels</h2>
      <table class="table ncv">
        <colgroup><col style="width:13.2%"><col style="width:14.5%"><col style="width:19.8%"><col style="width:13.8%"><col style="width:19.3%"><col style="width:19.4%"></colgroup>
        <thead>
          <tr><th rowspan="2">Period<br>(year)</th><th colspan="2" class="bl">Energy savings</th><th colspan="2" class="bl">Maintenancecost</th><th rowspan="2" class="bl">NCV<br>Total savings<br>(EUR)</th></tr>
          <tr><th class="bl">Partial</th><th>Accumulated</th><th class="bl">Partial</th><th>Accumulated</th></tr>
        </thead>
        <tbody id="rows"></tbody>
      </table>
      <svg class="charts" id="charts" width="592" height="450" viewBox="173 991 592 450" role="img" aria-label="Future savings and NCV charts"></svg>
    </article>
    <div class="gutter r"></div>
    <div class="vbar d-flex flex-column align-items-center"><svg width="10" height="10"><use href="#cu"/></svg><div class="thumb mt-auto mb-3"></div><svg width="10" height="10"><use href="#cd"/></svg></div>
  </div>
  <footer class="dfoot d-flex align-items-center justify-content-center"><button class="okbtn"><u>A</u>ccept</button></footer>
</section>
</main>
<script>
const data=[
['2026.04','0.00','440.00','0.00','-10812.00'],['1985.36','2026.04','445.28','440.00','-8785.96'],
['1945.13','4011.39','450.62','885.28','-6800.61'],['1905.33','5956.52','456.03','1335.90','-4855.48'],
['1865.96','7861.85','461.50','1791.93','-2950.15'],['1827.01','9727.81','467.04','2253.44','-1084.19'],
['1788.48','11554.82','472.65','2720.48','742.82'],['1750.35','13343.31','478.32','3193.12','2531.31'],
['1712.62','15093.66','484.06','3671.44','4281.66'],['1675.28','16806.28','489.87','4155.50','5994.28']];
document.getElementById('rows').innerHTML=data.map((r,i)=>`<tr><td>${i}</td><td class="bl">${r[0]}</td><td>${r[1]}</td><td class="bl">${r[2]}</td><td>${r[3]}</td><td class="bl ${r[4]<0?'neg':'pos'}">${r[4]}</td></tr>`).join('');
const T=(x,y,s,a,z,w)=>`<text x="${x}" y="${y}" text-anchor="${a}" font-size="${z}" font-weight="${w||400}">${s}</text>`;
const L=(d,c,w,e)=>`<path d="${d}" stroke="${c}" stroke-width="${w}" fill="none" ${e||''}/>`;
let g=T(485,1015,'Future savings','middle',8)+T(324,1034,'EUR','middle',7,700);
for(let i=0;i<=9;i++){const y=1207-i*18;g+=L(`M316 ${y}h8`,'#555',1)+T(311,y+2,i*2000,'end',6)}
for(let i=0;i<9;i++){const x=324+i*36+18,h=data[i+1][1]/18000*162;g+=`<rect x="${x-8}" y="${1207-h}" width="15" height="${h}" fill="#0000c4"/>`+L(`M${x+18} 1207v7`,'#444',1)+T(x,1226,i+1,'middle',6)}
g+=L('M324 1045V1207H647V1045z','#555',1.5)+T(485,1245,'year','middle',7,700);
g+=T(486,1268,'NCV','middle',8)+T(325,1287,'EUR','middle',7,700)+L('M326 1359H648','#777',2,'stroke-dasharray="2 3"');
for(let v=6000;v>=-6000;v-=2000){const y=1359-v/2000*20.2;g+=L(`M317 ${y}h9`,'#555',1)+T(312,y+2,v,'end',6)}
for(let i=0;i<9;i++){const x=326+i*36+18,v=+data[i+1][4],h=Math.abs(v)/2000*20.2;g+=`<rect x="${x-8}" y="${v<0?1359:1359-h}" width="15" height="${h}" fill="#0000c4"/>`}
g+=L('M326 1441V1298.500H648.500V1441','#555',1.2);
document.getElementById('charts').innerHTML=g;
</script>
</body>
</html>
